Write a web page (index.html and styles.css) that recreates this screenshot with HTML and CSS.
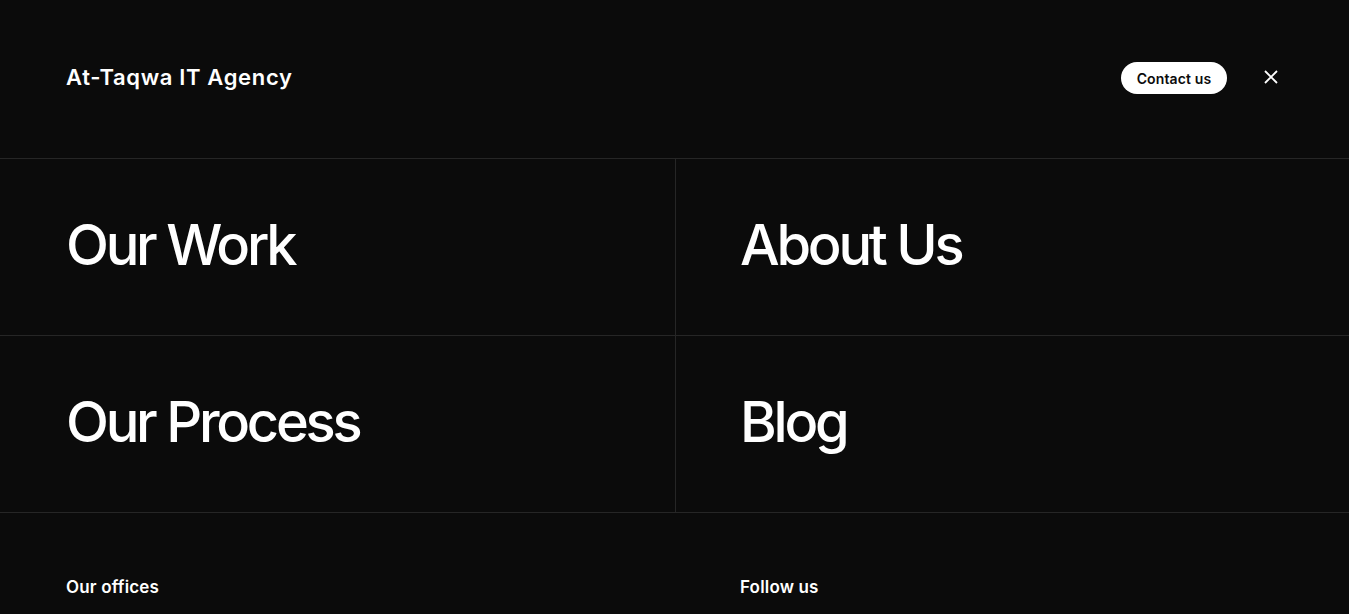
FILE: index.html
```html
<!DOCTYPE html>
<html lang="en">
<head>
<meta charset="utf-8">
<title>At-Taqwa IT Agency</title>
<link rel="stylesheet" href="styles.css">
</head>
<body>
<div class="menu">
  <header class="header">
    <div class="brand">At-Taqwa IT Agency</div>
    <div class="actions">
      <a class="contact" href="#">Contact us</a>
      <button class="close" aria-label="Close">
        <svg width="14" height="14" viewBox="0 0 14 14"><path d="M1 1 L13 13 M13 1 L1 13" stroke="#fff" stroke-width="1.8" fill="none"/></svg>
      </button>
    </div>
  </header>
  <nav class="grid">
    <a class="cell" href="#">Our Work</a>
    <a class="cell right" href="#">About Us</a>
    <a class="cell" href="#">Our Process</a>
    <a class="cell right" href="#">Blog</a>
  </nav>
  <footer class="footer">
    <div class="fcol">Our offices</div>
    <div class="fcol right">Follow us</div>
  </footer>
</div>
</body>
</html>
```

FILE: styles.css
```css
* { box-sizing: border-box; }
html, body { margin: 0; padding: 0; }
body {
  background: #0b0b0b;
  color: #fff;
  font-family: Inter, "Noto Sans", sans-serif;
  height: 614px;
  overflow: hidden;
}
.menu { display: flex; flex-direction: column; }
.header {
  height: 159px;
  border-bottom: 1px solid #262626;
  display: flex;
  align-items: center;
  justify-content: space-between;
  padding: 0 71px 4px 66px;
}
.brand {
  font-size: 22px;
  font-weight: 600;
  letter-spacing: 0.03em;
}
.actions { display: flex; align-items: center; gap: 37px; }
.contact {
  display: inline-flex;
  align-items: center;
  justify-content: center;
  height: 32px;
  width: 106px;
  margin-top: 2px;
  background: #fff;
  color: #0b0b0b;
  border-radius: 16px;
  font-size: 14px;
  font-weight: 600;
  letter-spacing: 0.01em;
  text-decoration: none;
}
.close {
  background: none;
  border: 0;
  padding: 0;
  width: 14px;
  height: 14px;
  display: flex;
  cursor: pointer;
}
.grid {
  display: grid;
  grid-template-columns: 676px 1fr;
}
.cell {
  height: 177px;
  border-bottom: 1px solid #262626;
  display: flex;
  align-items: center;
  padding-left: 66px;
  padding-bottom: 4px;
  color: #fff;
  text-decoration: none;
  font-size: 56px;
  font-weight: 500;
  letter-spacing: -0.058em;
}
.cell:not(.right) { border-right: 1px solid #262626; }
.cell.right { padding-left: 64px; }
.footer {
  display: grid;
  grid-template-columns: 676px 1fr;
  padding-top: 64px;
}
.fcol {
  padding-left: 66px;
  font-size: 17px;
  font-weight: 600;
  letter-spacing: 0.01em;
}
.fcol.right { padding-left: 64px; }
```
